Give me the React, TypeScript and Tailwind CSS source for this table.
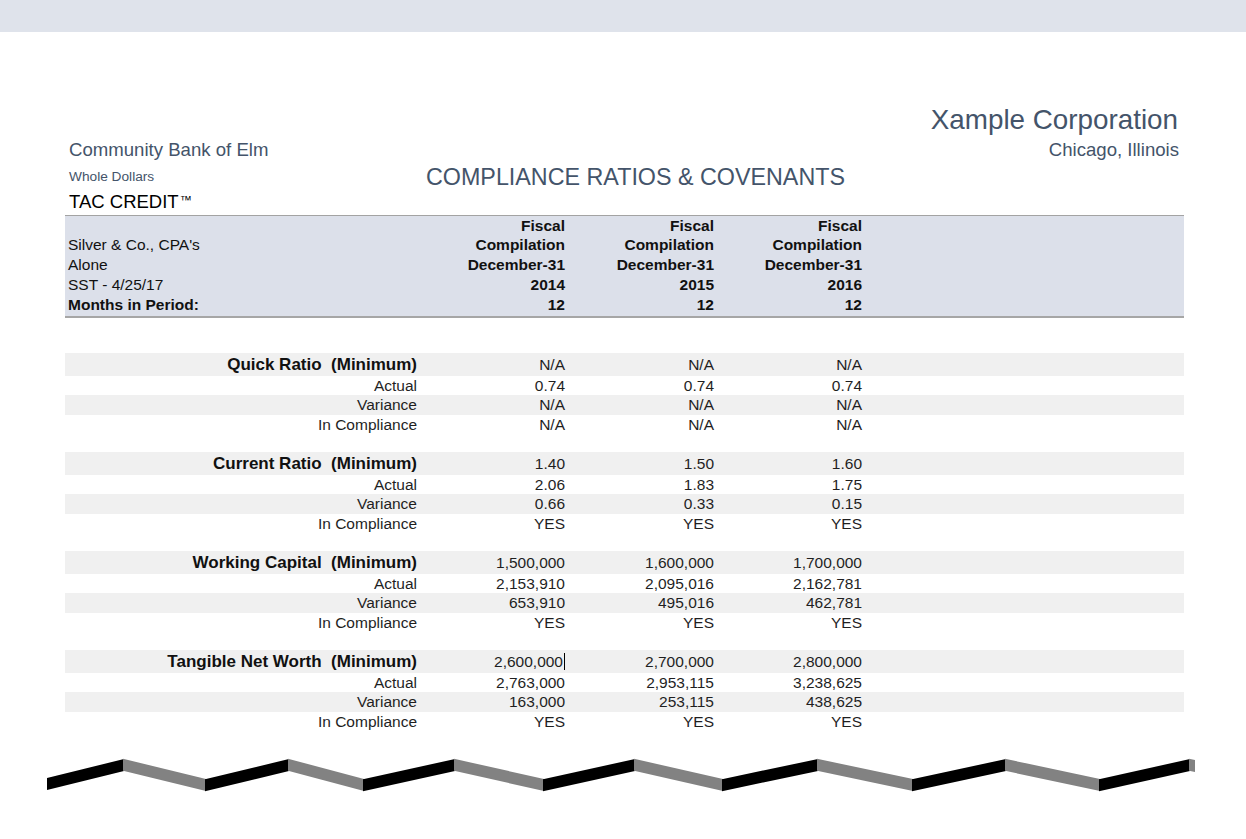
import React from "react";

type Group = {
  label: string;
  min: string[];
  actual: string[];
  variance: string[];
  compliance: string[];
  cursor?: boolean;
};

const GROUPS: Group[] = [
  {
    label: "Quick Ratio",
    min: ["N/A", "N/A", "N/A"],
    actual: ["0.74", "0.74", "0.74"],
    variance: ["N/A", "N/A", "N/A"],
    compliance: ["N/A", "N/A", "N/A"],
  },
  {
    label: "Current Ratio",
    min: ["1.40", "1.50", "1.60"],
    actual: ["2.06", "1.83", "1.75"],
    variance: ["0.66", "0.33", "0.15"],
    compliance: ["YES", "YES", "YES"],
  },
  {
    label: "Working Capital",
    min: ["1,500,000", "1,600,000", "1,700,000"],
    actual: ["2,153,910", "2,095,016", "2,162,781"],
    variance: ["653,910", "495,016", "462,781"],
    compliance: ["YES", "YES", "YES"],
  },
  {
    label: "Tangible Net Worth",
    min: ["2,600,000", "2,700,000", "2,800,000"],
    actual: ["2,763,000", "2,953,115", "3,238,625"],
    variance: ["163,000", "253,115", "438,625"],
    compliance: ["YES", "YES", "YES"],
    cursor: true,
  },
];

const COLS = "grid grid-cols-[352px_148px_149px_148px_1fr]";

function DataRow({
  label,
  values,
  striped,
  bold,
  height,
  cursor,
}: {
  label: React.ReactNode;
  values: string[];
  striped?: boolean;
  bold?: boolean;
  height: string;
  cursor?: boolean;
}) {
  return (
    <div
      className={`${COLS} items-center leading-none ${height} ${striped ? "bg-[#f0f0f0]" : ""}`}
    >
      <div
        className={`text-right whitespace-pre ${
          bold ? "text-[17px] font-bold text-[#111]" : "text-[15.5px] text-[#1f1f1f]"
        }`}
      >
        {label}
      </div>
      {values.map((v, i) => (
        <div key={i} className="text-right text-[15.5px] text-[#1f1f1f]">
          {v}
          {cursor && i === 0 ? (
            <span className="ml-px inline-block h-[17px] w-px bg-black align-[-3px]" />
          ) : null}
        </div>
      ))}
      <div />
    </div>
  );
}

// woven zigzag ribbon under the table
function Zigzag() {
  const pts: [number, number][] = [
    [47, 783],
    [124, 764],
    [206, 784],
    [289, 764],
    [364, 784],
    [455, 764],
    [544, 784],
    [635, 764],
    [723, 784],
    [818, 764],
    [913, 784],
    [1006, 764],
    [1100, 784],
    [1190, 764],
    [1195, 765],
  ];
  const half = 6;
  const segs = pts.slice(0, -1).map((p, i) => {
    const q = pts[i + 1];
    const rising = q[1] < p[1];
    const x1 = i === 0 ? p[0] : p[0] - 1;
    const y1 = i === 0 ? p[1] : p[1] + (q[1] - p[1]) * (-1 / (q[0] - p[0]));
    return {
      d: `${x1},${y1 - half} ${q[0]},${q[1] - half} ${q[0]},${q[1] + half} ${x1},${y1 + half}`,
      fill: rising ? "#000000" : "#828282",
    };
  });
  return (
    <svg width="1246" height="50" viewBox="0 750 1246 50" className="block">
      {segs.map((s, i) => (
        <polygon key={i} points={s.d} fill={s.fill} />
      ))}
    </svg>
  );
}

export default function App() {
  return (
    <div className="min-h-[839px] w-[1246px] bg-white font-['Liberation_Sans',Arial,sans-serif]">
      <div className="h-8 bg-[#dfe3eb]" />

      <div className="ml-[65px] w-[1119px] pt-[73px]">
        <div className="flex h-[30px] items-center justify-end pr-[6px] text-[27.8px] text-[#44546a]">
          Xample Corporation
        </div>
        <div className="flex h-[30px] items-center justify-between pl-[4px] pr-[5px] text-[18.6px] text-[#44546a]">
          <span>Community Bank of Elm</span>
          <span>Chicago, Illinois</span>
        </div>
        <div className="flex h-[24px] items-center pl-[4px]">
          <span className="w-[357px] text-[13.7px] text-[#44546a]">Whole Dollars</span>
          <span className="text-[23.3px] text-[#44546a]">COMPLIANCE RATIOS &amp; COVENANTS</span>
        </div>
        <div className="flex h-[26px] items-center pl-[4px] text-[18.5px] text-black">
          TAC CREDIT<span className="ml-px -translate-y-[2px] text-[12px]">™</span>
        </div>

        <div className="border-t border-b-2 border-t-[#a3a3a3] border-b-[#a6a6a6] bg-[#dce0ea] pb-px text-[15.5px] leading-none text-[#111]">
          {[
            ["", "Fiscal"],
            ["Silver & Co., CPA's", "Compilation"],
            ["Alone", "December-31"],
            ["SST - 4/25/17", null],
            ["Months in Period:", "12"],
          ].map(([left, val], r) => (
            <div key={r} className={`${COLS} ${r === 0 ? "h-[19px]" : "h-5"} items-center`}>
              <div className={`pl-[3px] ${r === 4 ? "font-bold" : ""}`}>{left}</div>
              {["2014", "2015", "2016"].map((yr) => (
                <div key={yr} className="text-right font-bold">
                  {val === null ? yr : val}
                </div>
              ))}
              <div />
            </div>
          ))}
        </div>

        <div className="mt-[35px]">
          {GROUPS.map((g, gi) => (
            <div key={g.label}>
              <DataRow
                label={`${g.label}  (Minimum)`}
                values={g.min}
                striped
                bold
                height="h-[23px]"
                cursor={g.cursor}
              />
              <DataRow label="Actual" values={g.actual} height="h-[19px]" />
              <DataRow label="Variance" values={g.variance} striped height="h-5" />
              <DataRow label="In Compliance" values={g.compliance} height="h-[19px]" />
              {gi < GROUPS.length - 1 ? <div className="h-[18px]" /> : null}
            </div>
          ))}
        </div>
      </div>

      <div className="mt-5">
        <Zigzag />
      </div>
    </div>
  );
}
